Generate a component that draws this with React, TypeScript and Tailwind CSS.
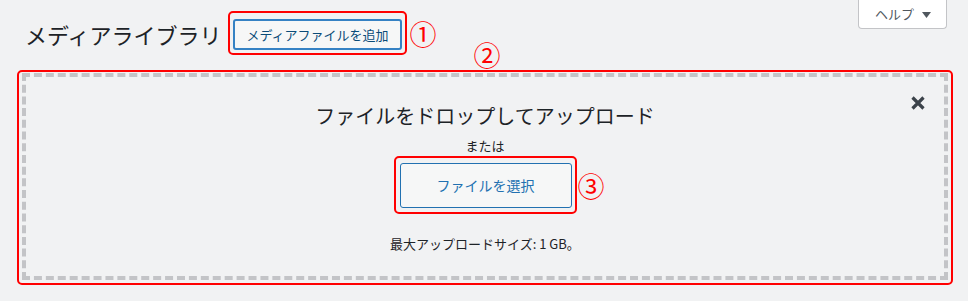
import React from 'react';

const App: React.FC = () => {
  return (
    <div className="min-h-screen bg-[#f1f2f3] font-['Noto_Sans_CJK_JP','Noto_Sans',sans-serif] text-[#1d2327]">
      {/* ヘッダー */}
      <div className="flex items-start justify-between pr-[21px]">
        <div className="flex items-center pl-[25px] pt-[11px]">
          <h1 className="mt-[2px] text-[22px] font-normal leading-[30px] text-[#1d2327]">メディアライブラリ</h1>
          <div className="ml-[7px] rounded-[5px] border-2 border-[#ff0000] px-[3px] pt-[6px] pb-[3px]">
            <button
              type="button"
              className="flex h-[31px] items-center rounded-[3px] border-2 border-[#3582c4] bg-[#f6f7f7] px-[11px] text-[13px] leading-none text-[#0a4b78]"
            >
              メディアファイルを追加
            </button>
          </div>
          <span className="ml-[3px] text-[27px] font-normal leading-none text-[#ff0000]">①</span>
        </div>
        <button
          type="button"
          className="flex h-[29px] items-center gap-[8px] rounded-b-[4px] border border-t-0 border-[#c3c4c7] bg-white pl-[16px] pr-[15px] text-[13px] text-[#50575e]"
        >
          ヘルプ
          <svg width="9" height="6" viewBox="0 0 9 6" className="mt-[1px]">
            <path d="M0 0h9L4.5 6z" fill="#50575e" />
          </svg>
        </button>
      </div>

      {/* アップロード領域 */}
      <div className="relative ml-[17px] mr-[15px] mt-[15px] rounded-[5px] border-2 border-[#ff0000] px-[3px] pt-[1px] pb-[3px]">
        <span className="absolute -top-[31px] left-1/2 ml-[2px] -translate-x-1/2 text-[27px] font-normal leading-none text-[#ff0000]">②</span>
        <div className="relative flex flex-col items-center border-4 border-dashed border-[#c3c4c7] pt-[25px] pb-[22px]">
          <button type="button" className="absolute right-[18px] top-[18px]">
            <svg width="16" height="17" viewBox="0 0 16 17">
              <path d="M2.5 2.5l11 11M13.5 2.5l-11 11" stroke="#3c434a" strokeWidth="3.2" />
            </svg>
          </button>
          <h2 className="text-[20px] font-normal leading-[28px] text-[#1d2327]">ファイルをドロップしてアップロード</h2>
          <p className="mt-[6px] text-[13px] leading-[20px] text-[#1d2327]">または</p>
          <div className="relative rounded-[5px] border-2 border-[#ff0000] pl-[4px] pr-[3px] pt-[5px] pb-[4px]">
            <button
              type="button"
              className="flex h-[45px] w-[172px] items-center justify-center rounded-[3px] border border-[#2271b1] bg-[#f6f7f7] text-[14px] text-[#2271b1]"
            >
              ファイルを選択
            </button>
            <span className="absolute left-full top-1/2 ml-[3px] -translate-y-1/2 text-[27px] font-normal leading-none text-[#ff0000]">③</span>
          </div>
          <p className="mt-[20px] text-[13px] leading-[20px] text-[#1d2327]">最大アップロードサイズ: 1 GB。</p>
        </div>
      </div>
    </div>
  );
};

export default App;
